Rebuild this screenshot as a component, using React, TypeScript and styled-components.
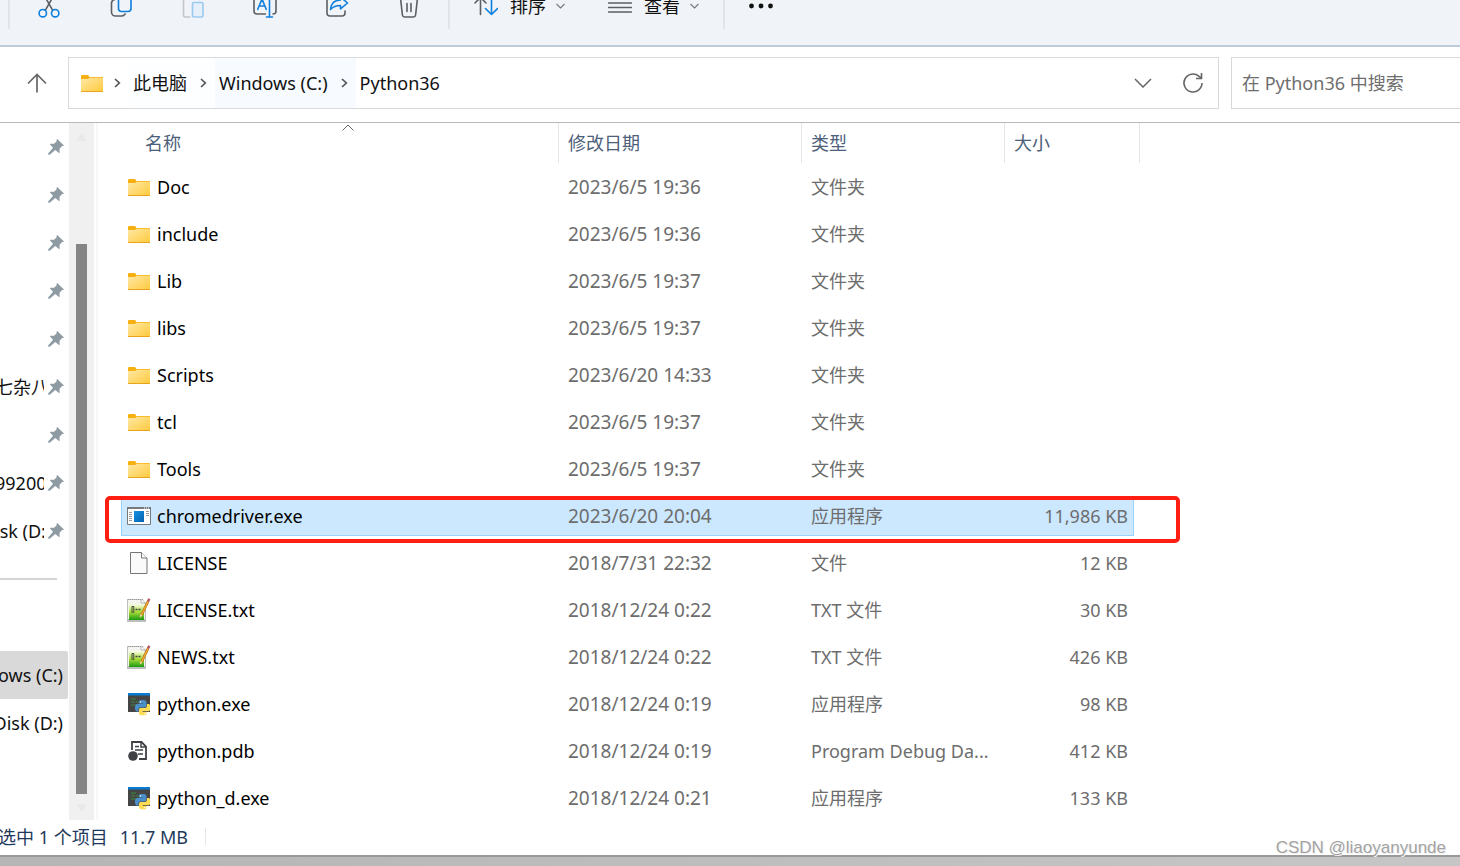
import React from "react";
import styled, { createGlobalStyle, css } from "styled-components";

const GlobalStyle = createGlobalStyle`
  *, *::before, *::after { box-sizing: border-box; }
  html, body { margin: 0; padding: 0; }
  body {
    overflow: hidden;
    background: #fff;
    color: #111;
    font-family: "Noto Sans", "Noto Sans CJK SC", sans-serif;
    font-size: 18px;
    line-height: 24px;
  }
  button, input { font: inherit; color: inherit; }
`;

const Window = styled.div`
  position: relative;
  display: flex;
  flex-direction: column;
  height: 100vh;
  overflow: hidden;
`;

const PlainButton = styled.button`
  display: flex;
  align-items: center;
  padding: 0;
  border: 0;
  background: none;
  white-space: nowrap;
`;

/* ---------- Command bar, scrolled partly out of view ---------- */

const CommandBar = styled.div`
  display: flex;
  align-items: center;
  flex: none;
  height: 81px;
  margin-top: -34px;
  padding-left: 8px;
  background: #f0f3f8;
  border-bottom: 2px solid #bdcad9;
`;

const BarDivider = styled.span`
  width: 2px;
  height: 46px;
  background: #e1e4e8;
`;

const IconGroup = styled.div`
  display: flex;
  padding: 0 3px;
`;

const IconButton = styled(PlainButton)`
  justify-content: center;
  width: 72px;
  height: 46px;
`;

const MenuGroup = styled.div`
  display: flex;
  gap: 43px;
  padding: 0 24px;
`;

const MenuButton = styled(PlainButton)`
  gap: 12px;
  height: 46px;
  svg:last-child { margin-left: -2px; }
`;

const MoreButton = styled(PlainButton)`
  height: 46px;
  padding: 0 24px;
`;

/* ---------- Address row ---------- */

const AddressRow = styled.div`
  display: flex;
  align-items: center;
  flex: none;
  height: 76px;
  padding-bottom: 3px;
  border-bottom: 1px solid #b9b9b9;
`;

const UpButton = styled(PlainButton)`
  justify-content: center;
  width: 68px;
  padding-left: 6px;
`;

const AddressBox = styled.nav`
  display: flex;
  flex: 1;
  align-items: stretch;
  height: 52px;
  padding: 0 14px 0 12px;
  border: 1px solid #d9d9d9;
`;

const FolderSlot = styled.span`
  display: flex;
  align-items: center;
  width: 25px;
`;

const CrumbText = styled(PlainButton)<{ $tint?: string }>`
  padding: 0 5px 0 4px;
  background: ${(p) => p.$tint ?? "none"};
`;

const CrumbArrow = styled(PlainButton)<{ $tint?: string }>`
  justify-content: center;
  width: 23px;
  background: ${(p) => p.$tint ?? "none"};
`;

const AddressTools = styled.div`
  display: flex;
  gap: 30px;
  margin-left: auto;
`;

const SearchInput = styled.input`
  width: 229px;
  height: 52px;
  margin-left: 12px;
  padding: 0 10px;
  border: 1px solid #d9d9d9;
  border-right: 0;
  border-radius: 0;
  outline: 0;
  background: #fff;
  &::placeholder { color: #6e6e6e; opacity: 1; }
`;

/* ---------- Body ---------- */

const Body = styled.div`
  display: flex;
  flex: 1;
  min-height: 0;
  overflow: hidden;
`;

const SideNav = styled.nav`
  flex: none;
  width: 69px;
  overflow: hidden;
`;

const PinnedItem = styled.button`
  display: flex;
  align-items: center;
  width: 68px;
  height: 48px;
  padding: 0;
  border: 0;
  background: none;
`;

const PinnedName = styled.span`
  flex: none;
  width: 49px;
  margin-left: -5px;
  overflow: hidden;
  text-align: left;
  white-space: nowrap;
`;

const PinSlot = styled.span`
  display: flex;
  padding-left: 4px;
`;

const SideRule = styled.hr`
  width: 57px;
  height: 2px;
  margin: 23px 0 71px;
  border: 0;
  background: #d4d4d4;
`;

const DriveItem = styled.button<{ $active?: boolean }>`
  display: flex;
  align-items: center;
  justify-content: flex-end;
  width: 68px;
  height: 48px;
  padding: 0 5px 0 0;
  border: 0;
  border-radius: 0 2px 2px 0;
  background: ${(p) => (p.$active ? "#d9d9d9" : "none")};
  white-space: nowrap;
`;

const ScrollTrack = styled.div`
  display: flex;
  flex: none;
  flex-direction: column;
  align-items: center;
  justify-content: space-between;
  width: 25px;
  padding: 10px 0 8px;
  background: #f0f0f0;
`;

const ScrollThumb = styled.div`
  flex: 1;
  width: 11px;
  margin: 103px 0 10px;
  background: #858585;
`;

const FilePane = styled.main`
  flex: 1;
  min-width: 0;
  margin-left: 2px;
  padding-left: 23px;
  border-left: 2px solid #f7f7f7;
`;

const FileTable = styled.table`
  width: 1019px;
  border-collapse: separate;
  border-spacing: 0;
  table-layout: fixed;
`;

const HeadCell = styled.th<{ $width: number }>`
  width: ${(p) => p.$width}px;
  height: 41px;
  padding: 0 0 1px;
  color: #4c607a;
  font-weight: 400;
  text-align: left;
`;

const HeadButton = styled(PlainButton)<{ $first?: boolean }>`
  position: relative;
  width: 100%;
  height: 40px;
  padding-left: 9px;
  border-right: 1px solid #e5e5e5;
  ${(p) => p.$first && css`
    width: 423px;
    margin-left: 15px;
  `}
`;

const SortMark = styled.svg`
  position: absolute;
  top: 1px;
  left: 50%;
  margin-left: -5px;
`;

const Row = styled.tr`
  position: relative;
`;

const Cell = styled.td`
  padding: 3px 0 4px;
`;

const CellBox = styled.div<{ $selected?: boolean; $kind?: "name" | "date" | "size" }>`
  display: flex;
  align-items: center;
  height: 40px;
  padding-left: 9px;
  color: #6d6d6d;
  white-space: nowrap;
  border: 0 solid #99d1ff;
  ${(p) => p.$kind === "name" && css`
    gap: 6px;
    padding-left: 6px;
    color: #000;
  `}
  ${(p) => p.$kind === "date" && css`
    font-size: 19px;
  `}
  ${(p) => p.$kind === "size" && css`
    justify-content: flex-end;
    margin-right: 6px;
    padding-right: 6px;
  `}
  ${(p) => p.$selected && css`
    background: #cce8ff;
    border-width: 1px 0;
  `}
  ${(p) => p.$selected && p.$kind === "name" && css`
    padding-left: 5px;
    border-left-width: 1px;
  `}
  ${(p) => p.$selected && p.$kind === "size" && css`
    padding-right: 5px;
    border-right-width: 1px;
  `}
`;

const IconSlot = styled.span`
  display: flex;
  justify-content: center;
  flex: none;
  width: 24px;
`;

const Highlight = styled.span`
  position: absolute;
  top: 3px;
  right: -40px;
  bottom: -3px;
  left: -16px;
  border: 4px solid #ff1f12;
  border-radius: 5px;
  pointer-events: none;
`;

/* ---------- Status bar ---------- */

const StatusBar = styled.footer`
  display: flex;
  align-items: center;
  flex: none;
  gap: 12px;
  height: 35px;
  margin-left: -2px;
  padding-bottom: 2px;
  color: #1e395b;
  white-space: nowrap;
`;

const StatusRule = styled.span`
  width: 1px;
  height: 17px;
  margin-left: 5px;
  background: #e6e6e6;
`;

const BottomEdge = styled.div`
  flex: none;
  height: 11px;
  border-top: 2px solid #999;
  background: linear-gradient(90deg, #b5b5b5, #c6c6c6);
`;

const Watermark = styled.span`
  position: absolute;
  right: 14px;
  bottom: 7px;
  color: #a3a3a3;
  font-family: "Liberation Sans", sans-serif;
  font-size: 17px;
  line-height: 22px;
  text-shadow: 1px 1px 0 #eee;
`;

/* ---------- Icons ---------- */

const GRAY = "#5c5f63";
const BLUE = "#0f7fdc";

const Stroke = ({ children }: { children: React.ReactNode }) => (
  <svg width="24" height="24" viewBox="0 0 24 24" fill="none" stroke={GRAY} strokeWidth="1.6" strokeLinecap="round" strokeLinejoin="round">
    {children}
  </svg>
);

const CutIcon = () => (
  <Stroke>
    <path d="M8.3 16.4 17 1M15.700 16.400 7 1" />
    <g stroke={BLUE}>
      <circle cx="5.8" cy="19.2" r="3.7" />
      <circle cx="18.2" cy="19.2" r="3.7" />
    </g>
  </Stroke>
);

const CopyIcon = () => (
  <Stroke>
    <path d="M5.5 5.5A4 4 0 0 0 2.5 9v9a4 4 0 0 0 4 4h6a4 4 0 0 0 3.6-2" />
    <rect x="9.5" y="1" width="12.5" height="16.5" rx="3" stroke={BLUE} />
  </Stroke>
);

const PasteIcon = () => (
  <Stroke>
    <path d="M5 3h-.5a2 2 0 0 0-2 2v16a2 2 0 0 0 2 2H9M14 3h2.5a2 2 0 0 1 2 2v.5" stroke="#c3c6ca" />
    <rect x="11.5" y="8.5" width="10.5" height="14.5" rx="1.5" stroke="#9bcaf0" fill="#e6f0fa" />
  </Stroke>
);

const RenameIcon = () => (
  <Stroke>
    <path d="M12.5 20H4a3 3 0 0 1-3-3V7a3 3 0 0 1 3-3h8.500M20 4a3 3 0 0 1 3 3v10a3 3 0 0 1-3 3" />
    <g stroke={BLUE}>
      <path d="M4.800 15.300 9 5l4.200 10.300M6.200 12h5.600" />
      <path d="M16.500 2v21M13.500 23h6M13.500 2h6" />
    </g>
  </Stroke>
);

const ShareIcon = () => (
  <Stroke>
    <path d="M9 4H5a3 3 0 0 0-3 3v12a3 3 0 0 0 3 3h12a3 3 0 0 0 3-3v-2" />
    <path d="M15.5 3l7 6-7 5.800v-3.300c-4.500 0-7.500 1.200-10 4 .5-5.700 4-9.300 10-9.500z" stroke={BLUE} />
  </Stroke>
);

const DeleteIcon = () => (
  <Stroke>
    <path d="M1.500 4h21M8.500 4a3.500 3.500 0 0 1 7 0M3.500 4l1.900 17a2.300 2.300 0 0 0 2.200 2h8.800a2.300 2.300 0 0 0 2.200-2l1.900-17" />
    <path d="M10 9.500v8M14 9.500v8" />
  </Stroke>
);

const SortIcon = () => (
  <Stroke>
    <path d="M6.500 20.500v-17M1 9l5.500-5.500L12 9" />
    <path d="M17.500 2v18.500M11.500 14.500l6 6 6-6" stroke={BLUE} />
  </Stroke>
);

const ViewIcon = () => (
  <Stroke>
    <path d="M.7 4.500h22.600M.7 9h22.600M.7 13.500h22.600M.7 18h22.600" />
  </Stroke>
);

const SmallChevron = () => (
  <svg width="9" height="6" viewBox="0 0 9 6" fill="none" stroke="#777" strokeWidth="1.1">
    <path d="M.5 1l4 4 4-4" />
  </svg>
);

const DotsIcon = () => (
  <svg width="24" height="6" viewBox="0 0 24 6" fill="#111">
    <circle cx="2.5" cy="3" r="2.400" />
    <circle cx="12" cy="3" r="2.400" />
    <circle cx="21.5" cy="3" r="2.400" />
  </svg>
);

const UpIcon = () => (
  <svg width="20" height="20" viewBox="0 0 20 20" fill="none" stroke="#666" strokeWidth="1.7">
    <path d="M10 19.500v-18M1 10.500l9-9 9 9" />
  </svg>
);

const CrumbChevron = () => (
  <svg width="7" height="10" viewBox="0 0 7 10" fill="none" stroke="#555" strokeWidth="1.7">
    <path d="M1 1l4.300 4L1 9" />
  </svg>
);

const DownChevron = () => (
  <svg width="18" height="10" viewBox="0 0 18 10" fill="none" stroke="#666" strokeWidth="1.5">
    <path d="M1 1l8 8 8-8" />
  </svg>
);

const RefreshIcon = () => (
  <svg width="22" height="22" viewBox="0 0 22 22" fill="none" stroke="#666" strokeWidth="1.6">
    <path d="M20 11a9 9 0 1 1-3.200-6.900L19.300 6" />
    <path d="M19.500 1v5.500H14" />
  </svg>
);

const PinIcon = () => (
  <svg width="16" height="16" viewBox="0 0 16 16" fill="#8f9ba3">
    <path d="M9.500.3l6.200 5.900c.3.400 0 .9-.4.900l-1.500.2-2.300 2.600.2 3.300c0 .6-.6.900-1 .5l-3.400-2.800-5.600 4.800H.3v-1.400l4.800-5.600-2.900-2.900c-.4-.4-.1-1.100.5-1.100l3.400.1 2.400-2.300.1-1.800c0-.5.600-.7.9-.4z" />
  </svg>
);

const TrackArrow = ({ down }: { down?: boolean }) => (
  <svg width="11" height="8" viewBox="0 0 11 8" fill="#e9e9e9">
    <path d={down ? "M0 0h11L5.500 8z" : "M0 8h11L5.500 0z"} />
  </svg>
);

const FolderIcon = () => (
  <svg width="22" height="17" viewBox="0 0 22 17">
    <defs>
      <linearGradient id="folderFace" x1="0" y1="0" x2="1" y2="1">
        <stop offset="0" stopColor="#ffe9a6" />
        <stop offset="1" stopColor="#ffc93c" />
      </linearGradient>
    </defs>
    <path d="M0 1a1 1 0 0 1 1-1h6l1.500 2H22v3H0z" fill="#f7b011" />
    <path d="M0 4h7l1.500-1.300H22V17H0z" fill="url(#folderFace)" />
    <path d="M0 16h22v1H0z" fill="#e8a51c" />
  </svg>
);

const AppIcon = () => (
  <svg width="24" height="18" viewBox="0 0 24 18">
    <defs>
      <linearGradient id="appBlue" x1="0" y1="0" x2="1" y2="1">
        <stop offset="0" stopColor="#1692e6" />
        <stop offset="1" stopColor="#0560ae" />
      </linearGradient>
    </defs>
    <path d="M.5.500h23v17H.5z" fill="#fff" stroke="#77797b" />
    <path d="M0 0h24v2H0z" fill="#77797b" />
    <path d="M17 1h1M19 1h1M21 1h1" stroke="#fff" />
    <path d="M7 4h10v11H7z" fill="url(#appBlue)" />
    <path d="M2 5.500h3M2 7.500h3M2 9.500h3M2 11.500h3M2 13.500h3M19 4.500h3M19 6.500h3M19 8.500h3" stroke="#9a9a9a" />
  </svg>
);

const PageIcon = () => (
  <svg width="18" height="22" viewBox="0 0 18 22" fill="#fafafa" stroke="#777">
    <path d="M.5.500h11l5.500 5.500v15.500H.5z" />
    <path d="M11.500.500V6H17" fill="#fff" />
  </svg>
);

const TextIcon = () => (
  <svg width="24" height="24" viewBox="0 0 24 24">
    <defs>
      <linearGradient id="noteGreen" x1="0" y1="0" x2="0" y2="1">
        <stop offset="0" stopColor="#fbfde9" />
        <stop offset=".5" stopColor="#a8dd38" />
        <stop offset="1" stopColor="#1b9a12" />
      </linearGradient>
    </defs>
    <path d="M0 1h15l4 4v19H0z" fill="#bcc0bc" />
    <path d="M1 2h13l4 4v15H1z" fill="#f4f5ef" />
    <path d="M2 6h15v16H2z" fill="url(#noteGreen)" />
    <path d="M1 1.500h15" stroke="#999" strokeDasharray="1 1" />
    <path d="M14 1v4h4" fill="#fff" stroke="#a5a5a5" strokeWidth=".8" />
    <path d="M5 15V8.500h1.800V15" fill="none" stroke="#3d4538" />
    <path d="M8.500 11.500h2M11.500 11.500h2" stroke="#3d4538" strokeWidth="1.600" />
    <path d="M21 3.500 14.500 17" stroke="#9b6110" strokeWidth="2.600" />
    <path d="M21 3.500 14.500 17" stroke="#f4a92b" strokeWidth="1.700" />
    <path d="M22.300.700 21 3.500" stroke="#b0505a" strokeWidth="2.400" />
    <path d="m13.200 16.200 2.500 1.200-3 2.400z" fill="#eed09c" />
  </svg>
);

const SNAKE =
  "M14.250.18l.9.2.73.26.59.3.45.32.34.34.25.34.16.33.1.3.04.26.02.2-.01.13V8.500l-.05.63-.13.55-.21.46-.26.38-.3.31-.33.25-.35.19-.35.14-.33.1-.3.07-.26.04-.21.02H8.770l-.69.05-.59.14-.5.22-.41.27-.33.32-.27.35-.2.36-.15.37-.1.35-.07.32-.04.27-.02.21v3.060H3.170l-.21-.03-.28-.07-.32-.12-.35-.18-.36-.26-.36-.36-.35-.46-.32-.59-.28-.73-.21-.88-.14-1.050-.05-1.230.06-1.220.16-1.040.24-.87.32-.71.36-.57.4-.44.42-.33.42-.24.4-.16.36-.1.32-.05.24-.01h.16l.06.01h8.160v-.83H6.180l-.01-2.750-.02-.37.05-.34.11-.31.17-.28.25-.26.31-.23.38-.2.44-.18.51-.15.58-.12.64-.1.71-.06.77-.04.84-.02z";

const PythonIcon = () => (
  <svg width="22" height="23" viewBox="0 0 22 23">
    <path d="M0 0h22v19H0z" fill="#454545" />
    <path d="M0 0h22v2.500H0z" fill="#0b7bd2" />
    <path d="M3 6h5M3 9h4M8 9h3M3 12h5" stroke="#3d8b3f" />
    <g transform="translate(7 7) scale(.64)">
      <path d={SNAKE} fill="#4a8fca" />
      <circle cx="8.700" cy="3.100" r="1.100" fill="#fff" />
      <g transform="rotate(180 12 12)">
        <path d={SNAKE} fill="#ffdc55" />
        <circle cx="8.700" cy="3.100" r="1.100" fill="#fff" />
      </g>
    </g>
  </svg>
);

const PdbIcon = () => (
  <svg width="22" height="20" viewBox="0 0 22 20" fill="none" stroke="#3f4144">
    <path d="M4 9V1h9.500L18 5.500V18h-7" strokeWidth="1.800" fill="#fff" />
    <path d="M13 1v5h5" strokeWidth="1.500" />
    <path d="M7 5.500h4M7 9h8M10 13h5" strokeWidth="1.500" />
    <circle cx="5" cy="15" r="4.800" fill="#3f4144" stroke="none" />
  </svg>
);

/* ---------- Data ---------- */

type FileRow = {
  icon: () => React.ReactElement;
  name: string;
  date: string;
  type: string;
  size?: string;
  selected?: boolean;
};

const files: FileRow[] = [
  { icon: FolderIcon, name: "Doc", date: "2023/6/5 19:36", type: "文件夹" },
  { icon: FolderIcon, name: "include", date: "2023/6/5 19:36", type: "文件夹" },
  { icon: FolderIcon, name: "Lib", date: "2023/6/5 19:37", type: "文件夹" },
  { icon: FolderIcon, name: "libs", date: "2023/6/5 19:37", type: "文件夹" },
  { icon: FolderIcon, name: "Scripts", date: "2023/6/20 14:33", type: "文件夹" },
  { icon: FolderIcon, name: "tcl", date: "2023/6/5 19:37", type: "文件夹" },
  { icon: FolderIcon, name: "Tools", date: "2023/6/5 19:37", type: "文件夹" },
  { icon: AppIcon, name: "chromedriver.exe", date: "2023/6/20 20:04", type: "应用程序", size: "11,986 KB", selected: true },
  { icon: PageIcon, name: "LICENSE", date: "2018/7/31 22:32", type: "文件", size: "12 KB" },
  { icon: TextIcon, name: "LICENSE.txt", date: "2018/12/24 0:22", type: "TXT 文件", size: "30 KB" },
  { icon: TextIcon, name: "NEWS.txt", date: "2018/12/24 0:22", type: "TXT 文件", size: "426 KB" },
  { icon: PythonIcon, name: "python.exe", date: "2018/12/24 0:19", type: "应用程序", size: "98 KB" },
  { icon: PdbIcon, name: "python.pdb", date: "2018/12/24 0:19", type: "Program Debug Da...", size: "412 KB" },
  { icon: PythonIcon, name: "python_d.exe", date: "2018/12/24 0:21", type: "应用程序", size: "133 KB" },
];

const pinned = ["", "", "", "", "", "七杂八", "", "99200", "isk (D:)"];

const tools = [
  { label: "剪切", icon: CutIcon },
  { label: "复制", icon: CopyIcon },
  { label: "粘贴", icon: PasteIcon },
  { label: "重命名", icon: RenameIcon },
  { label: "共享", icon: ShareIcon },
  { label: "删除", icon: DeleteIcon },
];

export default function App() {
  return (
    <Window>
      <GlobalStyle />
      <CommandBar role="toolbar">
        <BarDivider />
        <IconGroup>
          {tools.map(({ label, icon: Icon }) => (
            <IconButton key={label} aria-label={label}><Icon /></IconButton>
          ))}
        </IconGroup>
        <BarDivider />
        <MenuGroup>
          <MenuButton><SortIcon />排序<SmallChevron /></MenuButton>
          <MenuButton><ViewIcon />查看<SmallChevron /></MenuButton>
        </MenuGroup>
        <BarDivider />
        <MoreButton aria-label="更多"><DotsIcon /></MoreButton>
      </CommandBar>

      <AddressRow>
        <UpButton aria-label="向上"><UpIcon /></UpButton>
        <AddressBox>
          <FolderSlot><FolderIcon /></FolderSlot>
          <CrumbArrow aria-label="展开"><CrumbChevron /></CrumbArrow>
          <CrumbText $tint="#fdfeff">此电脑</CrumbText>
          <CrumbArrow $tint="#fdfeff" aria-label="展开"><CrumbChevron /></CrumbArrow>
          <CrumbText $tint="#f7fbff">Windows (C:)</CrumbText>
          <CrumbArrow $tint="#f7fbff" aria-label="展开"><CrumbChevron /></CrumbArrow>
          <CrumbText>Python36</CrumbText>
          <AddressTools>
            <PlainButton aria-label="历史记录"><DownChevron /></PlainButton>
            <PlainButton aria-label="刷新"><RefreshIcon /></PlainButton>
          </AddressTools>
        </AddressBox>
        <SearchInput type="text" aria-label="搜索" placeholder="在 Python36 中搜索" />
      </AddressRow>

      <Body>
        <SideNav>
          {pinned.map((name, i) => (
            <PinnedItem key={i}>
              <PinnedName>{name}</PinnedName>
              <PinSlot><PinIcon /></PinSlot>
            </PinnedItem>
          ))}
          <SideRule />
          <DriveItem $active>ows (C:)</DriveItem>
          <DriveItem>Disk (D:)</DriveItem>
        </SideNav>
        <ScrollTrack>
          <TrackArrow />
          <ScrollThumb />
          <TrackArrow down />
        </ScrollTrack>
        <FilePane>
          <FileTable>
            <thead>
              <tr>
                <HeadCell $width={438}>
                  <HeadButton $first>
                    名称
                    <SortMark width="12" height="7" viewBox="0 0 12 7" fill="none" stroke="#666">
                      <path d="M.5 6.500 6 1l5.500 5.500" />
                    </SortMark>
                  </HeadButton>
                </HeadCell>
                <HeadCell $width={243}><HeadButton>修改日期</HeadButton></HeadCell>
                <HeadCell $width={203}><HeadButton>类型</HeadButton></HeadCell>
                <HeadCell $width={135}><HeadButton>大小</HeadButton></HeadCell>
              </tr>
            </thead>
            <tbody>
              {files.map(({ icon: Icon, name, date, type, size, selected }) => (
                <Row key={name}>
                  <Cell>
                    <CellBox $kind="name" $selected={selected}>
                      <IconSlot><Icon /></IconSlot>
                      {name}
                    </CellBox>
                    {selected && <Highlight />}
                  </Cell>
                  <Cell><CellBox $kind="date" $selected={selected}>{date}</CellBox></Cell>
                  <Cell><CellBox $selected={selected}>{type}</CellBox></Cell>
                  <Cell><CellBox $kind="size" $selected={selected}>{size}</CellBox></Cell>
                </Row>
              ))}
            </tbody>
          </FileTable>
        </FilePane>
      </Body>

      <StatusBar>
        <span>选中 1 个项目</span>
        <span>11.7 MB</span>
        <StatusRule />
      </StatusBar>
      <BottomEdge />
      <Watermark>CSDN @liaoyanyunde</Watermark>
    </Window>
  );
}
